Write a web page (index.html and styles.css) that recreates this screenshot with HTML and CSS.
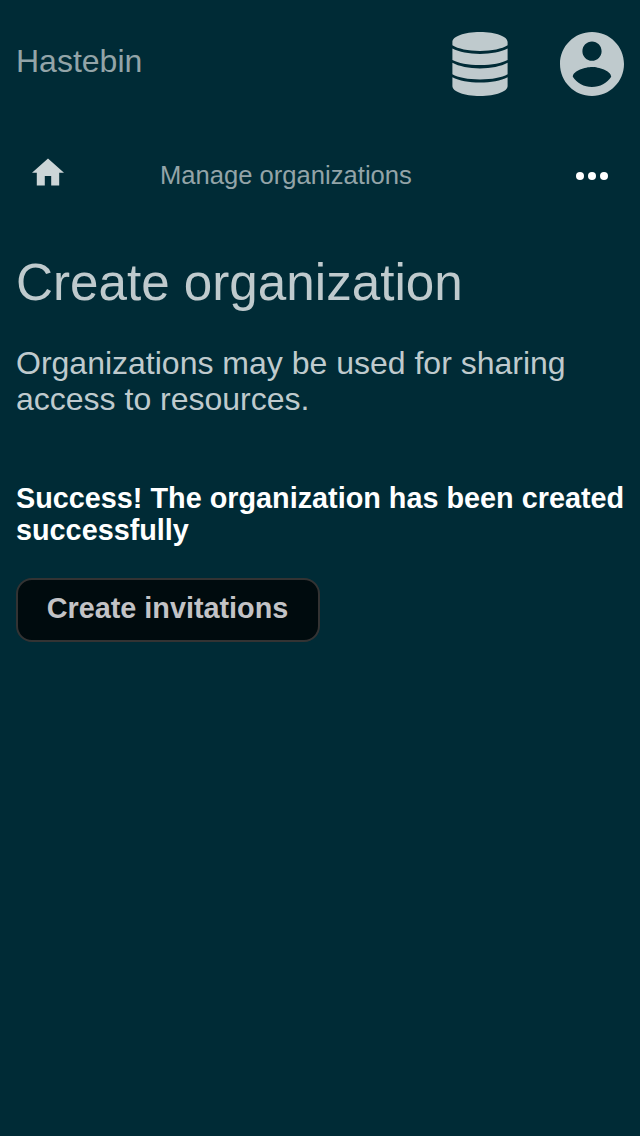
FILE: index.html
```html
<!DOCTYPE html>
<html lang="en">
<head>
<meta charset="utf-8">
<title>Hastebin</title>
<link rel="stylesheet" href="styles.css">
</head>
<body>
<header class="header">
  <a class="brand">Hastebin</a>
  <div class="actions">
    <svg class="icon-data" viewBox="0 0 56 64" aria-label="Storage"><path d="M.4 10C.4 4.500 12 0 28 0s27.600 4.500 27.600 10v3.300C50 16.900 40 18.900 28 18.900S6 16.900 .4 13.300zM.4 16.600C7 20 17 21.900 28 21.900s21-1.900 27.600-5.300v11.300C50 31 40 32.900 28 32.900S6 31 .4 27.900zM.4 30.800C7 34.400 17 36.400 28 36.400s21-2 27.600-5.600v11.400C50 45.500 40 47.400 28 47.400S6 45.500 .4 42.200zM.4 45.200C7 48.700 17 50.600 28 50.600s21-1.900 27.600-5.400V54c0 5.500-11.600 10-27.600 10S.4 59.500 .4 54z"/></svg>
    <svg class="icon-user" viewBox="2 2 20 20" aria-label="Account"><path d="M12 2C6.480 2 2 6.480 2 12s4.480 10 10 10 10-4.480 10-10S17.520 2 12 2zm0 3c1.660 0 3 1.340 3 3s-1.340 3-3 3-3-1.340-3-3 1.340-3 3-3zm0 14.200c-2.500 0-4.710-1.280-6-3.220.03-1.990 4-3.080 6-3.080 1.990 0 5.970 1.090 6 3.080-1.290 1.940-3.500 3.220-6 3.220z"/></svg>
  </div>
</header>
<nav class="nav">
  <svg class="icon-home" viewBox="2 2.75 20 17.5" aria-label="Home"><path d="M10 20v-6h4v6h5v-8h3L12 3 2 12h3v8z"/></svg>
  <a class="crumb">Manage organizations</a>
  <svg class="icon-more" viewBox="0 0 32 8" aria-label="More"><circle cx="4" cy="4" r="4"/><circle cx="16" cy="4" r="4"/><circle cx="28" cy="4" r="4"/></svg>
</nav>
<main class="content">
  <h1 class="title">Create organization</h1>
  <p class="lead">Organizations may be used for sharing access to resources.</p>
  <p class="message">Success! The organization has been created successfully</p>
  <button class="button" type="button">Create invitations</button>
</main>
</body>
</html>
```
FILE: styles.css
```css
* { box-sizing: border-box; }
body {
  margin: 0;
  min-height: 1136px;
  background: #002b36;
  color: #bfcacd;
  font-family: "Liberation Sans", Arial, sans-serif;
}
svg { display: block; fill: currentColor; }
.header {
  display: flex;
  justify-content: space-between;
  height: 128px;
  padding: 32px 16px;
}
.brand { padding-top: 11px; font-size: 32px; line-height: 36px; color: #93a4a8; }
.actions { display: flex; gap: 52px; }
.icon-data { width: 56px; height: 64px; }
.icon-user { width: 64px; height: 64px; }
.nav {
  display: flex;
  align-items: center;
  height: 96px;
  padding: 0 32px;
}
.icon-home { width: 32px; height: 28px; margin-top: -8px; color: #ccd5d7; }
.crumb { margin: -2px 0 0 96px; font-size: 25.6px; line-height: 30px; color: #93a4a8; }
.icon-more { width: 32px; height: 8px; margin-left: auto; color: #fff; }
.content { padding: 30px 16px 0; }
.title { margin: 0; font-size: 51.2px; line-height: 58px; font-weight: 400; }
.lead { margin: 33px 0 0; font-size: 32px; line-height: 36px; }
.message {
  margin: 65px -8px 0 0;
  font-size: 28.8px;
  line-height: 32px;
  font-weight: 700;
  color: #fff;
}
.button {
  display: block;
  width: 304px;
  height: 64px;
  margin-top: 32px;
  padding: 0 1px 4px 0;
  border: 2px solid #333;
  border-radius: 16px;
  background: #000b0e;
  color: #c3c3c6;
  font: 700 28.8px/32px "Liberation Sans", Arial, sans-serif;
}
```
